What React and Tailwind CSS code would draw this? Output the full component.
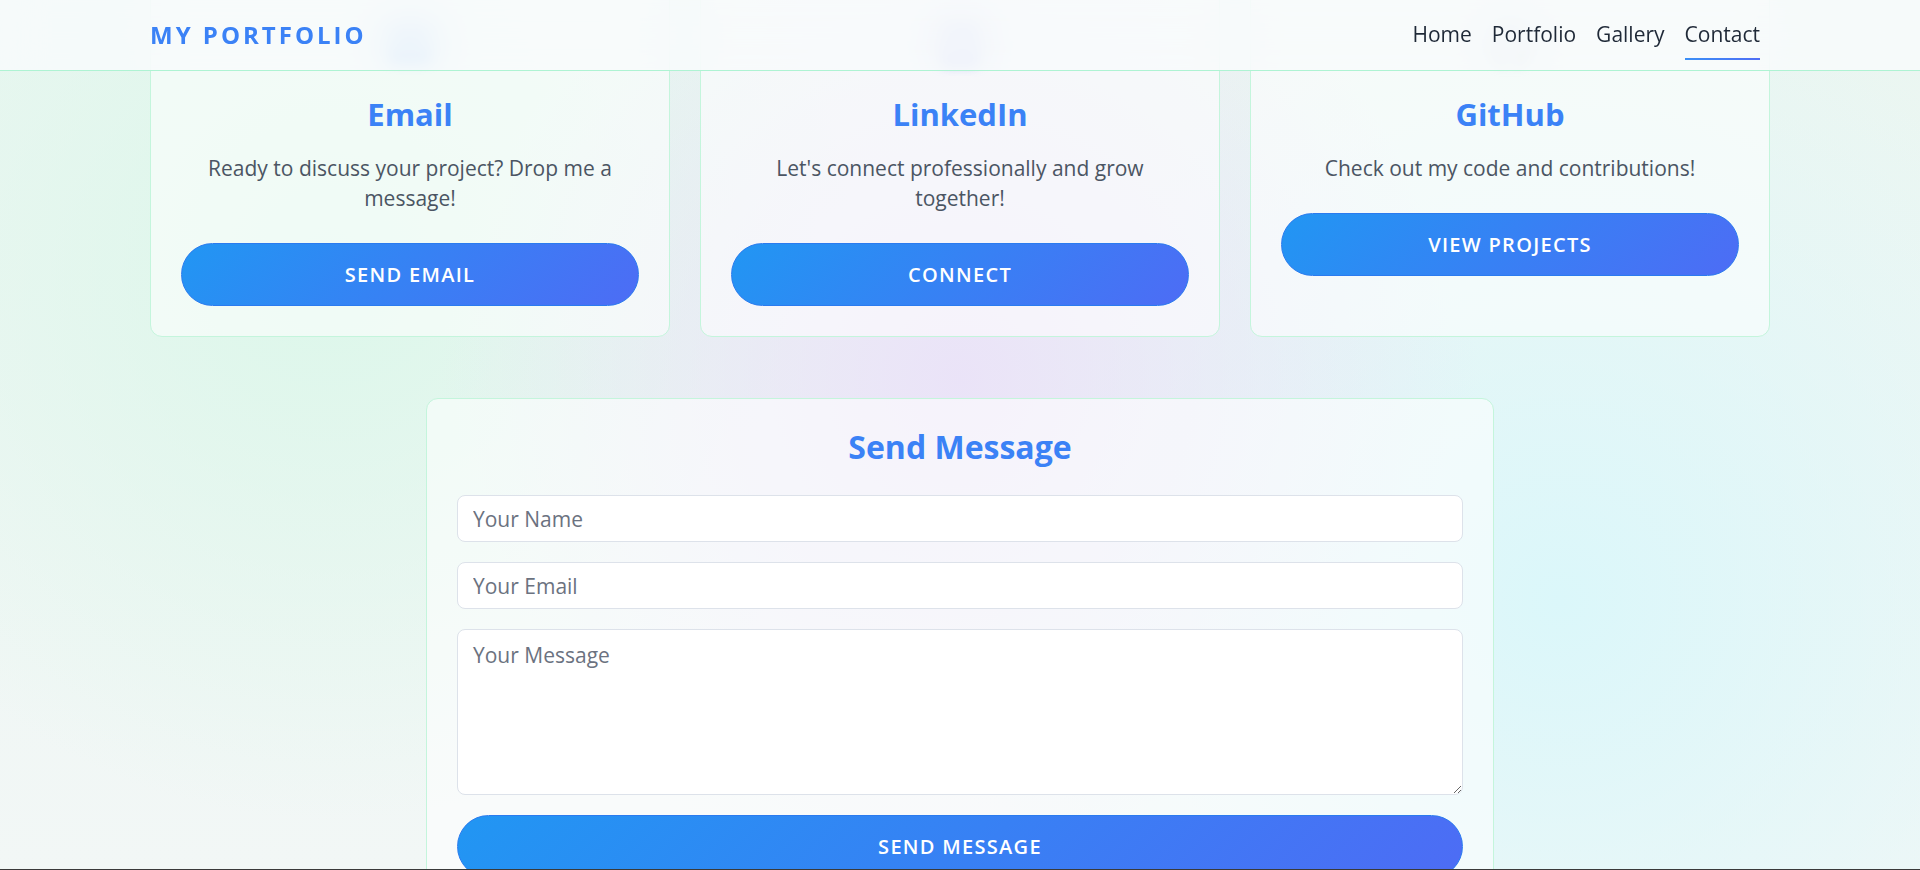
import React from 'react';
import { FaEnvelope, FaLinkedin, FaGithub } from 'react-icons/fa';

const NAV = ['Home', 'Portfolio', 'Gallery', 'Contact'];

const CONTACT_CARDS = [
  {
    icon: FaEnvelope,
    iconTone: 'text-[#4f9cf6]',
    title: 'Email',
    text: 'Ready to discuss your project? Drop me a message!',
    cta: 'Send Email',
  },
  {
    icon: FaLinkedin,
    iconTone: 'text-[#7385f2]',
    title: 'LinkedIn',
    text: "Let's connect professionally and grow together!",
    cta: 'Connect',
  },
  {
    icon: FaGithub,
    iconTone: 'text-[#a3b1c6]',
    title: 'GitHub',
    text: 'Check out my code and contributions!',
    cta: 'View Projects',
  },
];

const BTN =
  'w-full h-[63px] rounded-full border border-[#2b7bef] bg-[linear-gradient(135deg,#2196f3,#4d6cf5)] text-white text-[20px] font-semibold uppercase tracking-[1.3px]';

const FIELD =
  'w-full rounded-[8px] border border-[#dde2ea] bg-white px-[15px] text-[21px] text-[#1f2937] placeholder:text-[#6b7280] outline-none';

const Header = () => (
  <header className="absolute inset-x-0 top-0 z-10 h-[71px] border-b border-[#aef3d3] bg-[#f8fafc]/85 backdrop-blur-[22px]">
    <div className="mx-auto flex h-full w-[1620px] items-center justify-between">
      <a className="text-[24px] font-bold tracking-[3px] text-[#3b82f6]">MY PORTFOLIO</a>
      <nav className="mr-[10px] flex items-center gap-[20px] text-[21px] text-[#1f2937]">
        {NAV.map((item) => (
          <a key={item} className="relative">
            {item}
            {item === 'Contact' && (
              <span className="absolute left-0 right-0 top-[calc(100%+7px)] h-[2px] bg-[linear-gradient(90deg,#3b8ff6,#4f6ef5)]" />
            )}
          </a>
        ))}
      </nav>
    </div>
  </header>
);

const ContactCard = ({ icon: Icon, iconTone, title, text, cta }) => (
  <div className="flex flex-col items-center rounded-[12px] border border-[#c4f5dc] bg-white/55 p-[30px] text-center">
    {/* icon sits behind the frosted header at this scroll position */}
    <div className="flex h-[50px] items-center justify-center">
      <Icon className={`h-[42px] w-[42px] blur-[6px] ${iconTone}`} />
    </div>
    <h3 className="mt-[25px] text-[31px] font-bold leading-[38px] text-[#3b82f6]">{title}</h3>
    <p className="mt-[20px] text-[21px] leading-[30px] text-[#4b5563]">{text}</p>
    <button className={`${BTN} mt-[30px]`}>{cta}</button>
  </div>
);

export default function App() {
  return (
    <div className="relative h-[870px] overflow-hidden font-['Open_Sans',sans-serif] bg-[radial-gradient(circle_at_960px_380px,rgba(234,226,248,0.95),rgba(234,226,248,0)_520px),radial-gradient(circle_at_330px_260px,rgba(220,247,234,1),rgba(220,247,234,0)_560px),radial-gradient(circle_at_1560px_600px,rgba(219,247,250,1),rgba(219,247,250,0)_620px),linear-gradient(180deg,#eaf6f1,#f2f7f6)]">
      <Header />

      <main className="mx-auto mt-[-11px] w-[1620px]">
        <section className="grid grid-cols-3 gap-[30px]">
          {CONTACT_CARDS.map((card) => (
            <ContactCard key={card.title} {...card} />
          ))}
        </section>

        <section className="mx-auto mt-[61px] w-[1068px] rounded-[12px] border border-[#c4f5dc] bg-white/55 p-[30px]">
          <h2 className="mb-[30px] text-center text-[32px] font-bold leading-[36px] text-[#3b82f6]">
            Send Message
          </h2>
          <form className="flex flex-col gap-[20px]" onSubmit={(e) => e.preventDefault()}>
            <input className={`${FIELD} h-[47px]`} placeholder="Your Name" />
            <input className={`${FIELD} h-[47px]`} placeholder="Your Email" />
            <textarea className={`${FIELD} h-[166px] py-[10px]`} placeholder="Your Message" />
            <button className={BTN}>Send Message</button>
          </form>
        </section>
      </main>

      <div className="fixed inset-x-0 bottom-0 h-px bg-[#3a3a3a]" />
    </div>
  );
}
